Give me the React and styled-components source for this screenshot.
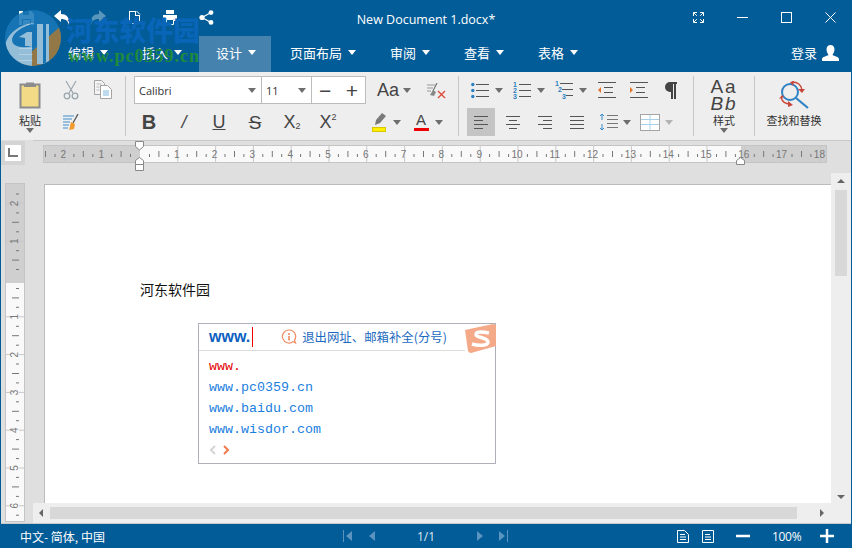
import React from "react";
import styled, { createGlobalStyle } from "styled-components";

const BLUE = "#025c97";
const CJK = `"Noto Sans CJK SC", "Noto Sans", sans-serif`;

const Global = createGlobalStyle`
  html, body { margin: 0; padding: 0; background: #fff; }
  * { box-sizing: border-box; }
`;

const Window = styled.div`
  position: relative;
  width: 852px;
  height: 548px;
  display: flex;
  flex-direction: column;
  overflow: hidden;
  font-family: ${CJK};
`;

/* title bar */
const TitleBar = styled.div`
  display: grid;
  grid-template-columns: 1fr auto 1fr;
  align-items: center;
  height: 36px;
  flex: none;
  background: ${BLUE};
  color: #fff;
`;
const QuickAccess = styled.div`
  display: flex;
  padding: 0 0 2px 8px;
`;
const QuickBtn = styled.div`
  width: 36px;
  display: flex;
  justify-content: center;
  opacity: ${({ $dim }) => ($dim ? 0.35 : 1)};
`;
const Title = styled.div`
  font: 12.5px "Open Sans", sans-serif;
  padding-top: 2px;
`;
const WindowControls = styled.div`
  display: flex;
  justify-content: flex-end;
  padding-bottom: 2px;
`;
const WinBtn = styled.div`
  width: 44px;
  display: flex;
  justify-content: center;
`;

/* menu */
const MenuBar = styled.div`
  display: flex;
  align-items: stretch;
  height: 36px;
  flex: none;
  background: ${BLUE};
  color: #fff;
  font-size: 13px;
  padding-left: 19px;
`;
const Burger = styled.div`
  width: 14px;
  margin-right: 18px;
  display: flex;
  flex-direction: column;
  justify-content: center;
  gap: 5px;
  & > i {
    display: block;
    height: 1px;
    background: #fff;
  }
`;
const MenuItem = styled.div`
  display: flex;
  align-items: center;
  gap: 6px;
  padding: ${({ $active }) => ($active ? "0 15px 3px 17px" : "0 17px 3px")};
  margin-right: ${({ $active }) => ($active ? "2px" : "0")};
  background: ${({ $active }) => ($active ? "#4583ae" : "transparent")};
`;
const Caret = styled.span`
  display: inline-block;
  flex: none;
  width: 0;
  height: 0;
  border-left: 4px solid transparent;
  border-right: 4px solid transparent;
  border-top: 5px solid ${({ $color }) => $color || "#6e6e6e"};
`;
const Login = styled.div`
  margin-left: auto;
  display: flex;
  align-items: center;
  gap: 5px;
  padding: 0 13px 3px 0;
`;

/* ribbon */
const Ribbon = styled.div`
  display: flex;
  height: 68px;
  flex: none;
  background: #eeeeee;
  border-left: 1px solid ${BLUE};
  border-right: 1px solid ${BLUE};
  color: #333;
`;
const Group = styled.div`
  width: ${({ $w }) => $w}px;
  flex: none;
  display: flex;
  gap: ${({ $gap }) => $gap || 0}px;
  margin: 4px 0;
  padding-left: ${({ $pl }) => $pl || 0}px;
  border-right: ${({ $last }) => ($last ? "none" : "1px solid #c6c6c6")};
`;
const Rows = styled.div`
  display: flex;
  flex-direction: column;
  gap: 4px;
`;
const Row = styled.div`
  display: flex;
  align-items: center;
  height: 28px;
  gap: ${({ $gap }) => $gap || 0}px;
`;
const Cell = styled.div`
  width: ${({ $w }) => $w}px;
  height: 28px;
  flex: none;
  display: flex;
  align-items: center;
  justify-content: center;
  gap: ${({ $gap }) => $gap || 0}px;
  margin-left: ${({ $ml }) => $ml || 0}px;
  background: ${({ $active }) => ($active ? "#c4c4c4" : "transparent")};
`;
const BigCol = styled.div`
  width: ${({ $w }) => $w}px;
  flex: none;
  display: flex;
  flex-direction: column;
  align-items: center;
`;
const BigIcon = styled.div`
  height: 37px;
  display: flex;
  align-items: center;
  justify-content: center;
`;
const BigLabel = styled.div`
  font-size: 11px;
  line-height: 14px;
  height: 15px;
  white-space: nowrap;
  color: #333;
`;
const Combo = styled.div`
  width: 232px;
  height: 28px;
  margin-left: 3px;
  display: flex;
  background: #fff;
  border: 1px solid #bcbcbc;
  font: 11px "Open Sans", sans-serif;
  color: #333;
`;
const ComboPart = styled.div`
  width: ${({ $w }) => $w}px;
  flex: none;
  display: flex;
  align-items: center;
  justify-content: space-between;
  padding: ${({ $last }) => ($last ? "0 7px" : "0 5px 0 4px")};
  border-right: ${({ $last }) => ($last ? "none" : "1px solid #bcbcbc")};
`;
const Glyph = styled.span`
  font-family: "Liberation Sans", sans-serif;
  font-size: ${({ $size }) => $size || 18}px;
  font-weight: ${({ $bold }) => ($bold ? 700 : 400)};
  font-style: ${({ $italic }) => ($italic ? "italic" : "normal")};
  text-decoration: ${({ $deco }) => $deco || "none"};
  color: #444;
  line-height: 1;
  & sub {
    font-size: 9px;
    line-height: 0;
    vertical-align: -1px;
  }
  & sup {
    font-size: 9px;
    line-height: 0;
    vertical-align: 8px;
  }
`;
const StyleSample = styled.div`
  font-family: "Liberation Sans", sans-serif;
  font-size: 19px;
  line-height: 17px;
  letter-spacing: 2px;
  text-align: center;
  color: #444;
  font-style: ${({ $italic }) => ($italic ? "italic" : "normal")};
`;

/* workspace */
const Workspace = styled.div`
  flex: 1;
  min-height: 0;
  display: grid;
  grid-template-columns: 32px 798px 20px;
  grid-template-rows: 33px 330px 20px 1px;
  background: #dfdfdf;
  border-left: 1px solid ${BLUE};
  border-right: 1px solid ${BLUE};
`;
const Corner = styled.div`
  grid-column: 1;
  grid-row: 1;
  width: 24px;
  height: 24px;
  margin-top: 1px;
  padding: 4px;
  background: #d4d4d4;
`;
const TabStop = styled.div`
  width: 16px;
  height: 16px;
  background: #fff;
  display: flex;
  align-items: center;
  justify-content: center;
`;
const HRuler = styled.svg`
  grid-column: 2 / 4;
  grid-row: 1;
  display: block;
`;
const VRuler = styled.svg`
  grid-column: 1;
  grid-row: 2 / 4;
  margin: 10px 0 0 4px;
  display: block;
`;
const Page = styled.div`
  grid-column: 2;
  grid-row: 2 / 4;
  position: relative;
  margin: 11px 0 0 11px;
  background: #fff;
  border-top: 1px solid #bcbcbc;
  border-left: 1px solid #bcbcbc;
  padding: 94px 0 0 95px;
  font-size: 14px;
  line-height: 20px;
  color: #111;
`;
const VScroll = styled.div`
  grid-column: 3;
  grid-row: 2;
  background: #eeeeee;
  display: flex;
  flex-direction: column;
  align-items: center;
  padding-top: 6px;
  z-index: 1;
`;
const VThumb = styled.div`
  width: 12px;
  height: 86px;
  margin-top: 7px;
  background: #d8d8d8;
`;
const HScroll = styled.div`
  grid-column: 2;
  grid-row: 3;
  background: #eeeeee;
  display: flex;
  align-items: center;
  padding-left: 6px;
  z-index: 1;
`;
const HThumb = styled.div`
  width: 747px;
  height: 12px;
  margin: 0 23px 0 7px;
  background: #d8d8d8;
`;
const ScrollCorner = styled.div`
  grid-column: 3;
  grid-row: 3;
  background: #eeeeee;
  z-index: 1;
`;
const ArrowUp = styled.span`
  width: 0;
  height: 0;
  flex: none;
  border-left: 4px solid transparent;
  border-right: 4px solid transparent;
  border-bottom: 4px solid #666;
`;
const ArrowDown = styled(ArrowUp)`
  border-bottom: none;
  border-top: 4px solid #666;
  margin-top: auto;
  margin-bottom: 4px;
`;
const ArrowSide = styled.span`
  width: 0;
  height: 0;
  flex: none;
  border-top: 4px solid transparent;
  border-bottom: 4px solid transparent;
  border-${({ $dir }) => ($dir === "left" ? "right" : "left")}: 4px solid #666;
`;
const BottomLine = styled.div`
  grid-column: 1 / 4;
  grid-row: 4;
  background: #c8c8c8;
`;

/* input method popup */
const ImePopup = styled.div`
  position: absolute;
  left: 153px;
  top: 138px;
  width: 298px;
  height: 141px;
  background: #fff;
  border: 1px solid #b0b0b8;
`;
const ImeHead = styled.div`
  width: 266px;
  height: 27px;
  padding-left: 10px;
  display: flex;
  align-items: center;
  border-bottom: 1px solid #dcdcdc;
`;
const ImeInput = styled.span`
  font: 700 16px "Liberation Sans", sans-serif;
  color: #0d5fc0;
`;
const ImeCaret = styled.span`
  width: 1px;
  height: 20px;
  margin-left: 2px;
  background: #f00000;
`;
const ImeHint = styled.span`
  display: flex;
  align-items: center;
  gap: 5px;
  margin-left: 28px;
  font-size: 12.4px;
  white-space: nowrap;
  color: #1b69c0;
`;
const ImeLogo = styled.svg`
  position: absolute;
  right: -1px;
  top: 0;
`;
const ImeList = styled.div`
  padding: 5px 0 0 10px;
  font: 13.33px/21px "Liberation Mono", monospace;
  color: #1a80e0;
`;
const ImeItem = styled.div`
  color: ${({ $match }) => ($match ? "#e60000" : "inherit")};
`;
const ImePager = styled.div`
  display: flex;
  gap: 7px;
  margin: 5px 0 0 10px;
`;

/* status bar */
const StatusBar = styled.div`
  display: flex;
  align-items: center;
  height: 24px;
  flex: none;
  background: ${BLUE};
  color: #fff;
  font-size: 12px;
  padding: 0 18px 0 20px;
`;
const Lang = styled.div`
  width: 323px;
  white-space: nowrap;
`;
const Pager = styled.div`
  display: flex;
  align-items: center;
  color: #dfe9f2;
`;
const PagerBtn = styled.span`
  display: flex;
  margin-left: ${({ $ml }) => $ml || 0}px;
`;
const PageNum = styled.span`
  width: 18px;
  margin-left: 42px;
  font: 12px "Open Sans", sans-serif;
  white-space: nowrap;
`;
const StatusRight = styled.div`
  margin-left: auto;
  display: flex;
  align-items: center;
`;
const Zoom = styled.span`
  width: 28px;
  margin: 0 20px 0 22px;
  font: 12px "Open Sans", sans-serif;
  letter-spacing: -0.3px;
  white-space: nowrap;
`;

/* watermark */
const Watermark = styled.div`
  position: absolute;
  left: 5px;
  top: 10px;
  display: flex;
  pointer-events: none;
`;
const LogoWrap = styled.div`
  opacity: 0.88;
`;
const MarkText = styled.div`
  margin: 5px 0 0 3px;
`;
const MarkTitle = styled.div`
  font: 900 26.8px/30px ${CJK};
  color: #0865b8;
  white-space: nowrap;
`;
const MarkUrl = styled.div`
  margin: 0 0 0 2px;
  font: 700 18px/22px "Liberation Serif", serif;
  letter-spacing: 1px;
  color: #1f8a3c;
  white-space: nowrap;
`;

/* drawings */
const Svg = ({ w, h, children, ...rest }) => (
  <svg width={w} height={h} viewBox={`0 0 ${w} ${h}`} fill="none" {...rest}>
    {children}
  </svg>
);

const SaveIcon = () => (
  <Svg w={15} h={15}>
    <path d="M0 1h12l3 3v11H0z" fill="#fff" />
    <rect x="4" y="1" width="6" height="4" fill={BLUE} />
    <rect x="3" y="9" width="9" height="6" fill={BLUE} />
    <rect x="4" y="10" width="7" height="5" fill="#fff" />
  </Svg>
);
const UndoIcon = ({ flip }) => (
  <Svg w={16} h={15} style={flip ? { transform: "scaleX(-1)" } : undefined}>
    <path d="M0 6l7-6v4c5 0 9 3 8 11-1-4-3-6-8-6v3z" fill="#fff" />
  </Svg>
);
const NewIcon = () => (
  <Svg w={13} h={15}>
    <path d="M1 1h7v4h4v9H1z" fill="#fff" />
    <path d="M2 2h5v4h4v7H2z" fill={BLUE} />
    <path d="M8.500 1l3.500 3.500" stroke="#fff" />
  </Svg>
);
const PrintIcon = () => (
  <Svg w={14} h={15}>
    <rect x="3" y="0" width="8" height="4" fill="#fff" />
    <path d="M0 5h14v6h-3V9H3v2H0z" fill="#fff" />
    <path d="M3.500 9.500h7v5h-7z" stroke="#fff" />
  </Svg>
);
const ShareIcon = () => (
  <Svg w={15} h={15}>
    <path d="M3 7.500L12 2.500M3 7.500l9 5" stroke="#fff" strokeWidth="1.200" />
    <circle cx="3" cy="7.500" r="2.600" fill="#fff" />
    <circle cx="12" cy="2.600" r="2.400" fill="#fff" />
    <circle cx="12" cy="12.400" r="2.400" fill="#fff" />
  </Svg>
);
const FullIcon = () => (
  <Svg w={11} h={11} stroke="#fff">
    <path d="M.5 4V.5H4M.8.8l3 3M7 .5h3.500V4M10.200.8l-3 3M.5 7v3.500H4M.8 10.200l3-3M7 10.500h3.500V7M10.200 10.200l-3-3" />
  </Svg>
);
const MinIcon = () => (
  <Svg w={11} h={11}>
    <path d="M0 5.500h11" stroke="#fff" />
  </Svg>
);
const MaxIcon = () => (
  <Svg w={11} h={11}>
    <rect x=".5" y=".5" width="10" height="10" stroke="#fff" />
  </Svg>
);
const CloseIcon = () => (
  <Svg w={11} h={11}>
    <path d="M.5.5l10 10M10.500.5l-10 10" stroke="#fff" />
  </Svg>
);
const UserIcon = () => (
  <Svg w={17} h={16}>
    <path d="M8.500 0c2.500 0 4 2 4 4.500S11 9 10.500 10c2 1 6.500 2 6.500 4v2H0v-2c0-2 4.500-3 6.500-4C6 9 4.500 7 4.500 4.500S6 0 8.500 0z" fill="#fff" />
  </Svg>
);
const PasteIcon = () => (
  <Svg w={22} h={28}>
    <rect x="1.500" y="3.500" width="19" height="23" fill="#f2da86" stroke="#8c8c8c" strokeWidth="2" />
    <path d="M7 4V1.500h8V4h2v2H5V4z" fill="#8c8c8c" />
  </Svg>
);
const CutIcon = () => (
  <Svg w={16} h={20} stroke="#9aa6ae">
    <path d="M3 1l7 12M13 1L6 13" strokeWidth="1.200" />
    <circle cx="4" cy="16" r="2.800" strokeWidth="1.300" />
    <circle cx="12" cy="16" r="2.800" strokeWidth="1.300" />
  </Svg>
);
const CopyIcon = () => (
  <Svg w={18} h={20}>
    <path d="M.5.500h7l3 3v11H.5z" fill="#f4f4f4" stroke="#a4a4a4" />
    <path d="M6.500 5.500h7l4 4v9h-11z" fill="#fff" stroke="#a4a4a4" />
    <path d="M9 11h6M9 13h6M9 15h6" stroke="#7fb6dc" />
    <path d="M2.500 4h5M2.500 7h3M2.500 10h3" stroke="#b8b8b8" />
  </Svg>
);
const PainterIcon = () => (
  <Svg w={16} h={16}>
    <path d="M0 2h11M0 5h9M0 8h7M0 11h6M0 14h5" stroke="#3f8fd0" />
    <path d="M15 0l-5 9" stroke="#555" strokeWidth="1.300" />
    <path d="M8 8l4 2-1 5-5 1c1-2 1-5 2-8z" fill="#f29a2e" />
  </Svg>
);
const ClearIcon = () => (
  <Svg w={20} h={17}>
    <path d="M0 3h8M0 6h6M0 9h4" stroke="#999" />
    <path d="M10 1L6 9" stroke="#555" />
    <path d="M3 13l3-5 3 2-2 4z" fill="#888" />
    <path d="M11 9l7 7M18 9l-7 7" stroke="#e04a3a" strokeWidth="1.400" />
  </Svg>
);
const HighlightIcon = () => (
  <Svg w={15} h={20}>
    <path d="M10 1l4 3-6 7-5 2 1-5z" fill="#7a7a7a" />
    <rect x="0" y="15" width="14" height="5" fill="#ffee00" />
    <rect x=".5" y="15.500" width="13" height="4" stroke="#d8c800" />
  </Svg>
);
const ListLines = ({ x, ys, w }) => (
  <path d={ys.map(y => `M${x} ${y}h${w}`).join("")} stroke="#555" />
);
const BulletsIcon = () => (
  <Svg w={18} h={17}>
    <ListLines x={5} ys={[2.5, 8.5, 14.5]} w={13} />
    <circle cx="1.800" cy="2.500" r="1.700" fill="#2c80c0" />
    <circle cx="1.800" cy="8.500" r="1.700" fill="#2c80c0" />
    <circle cx="1.800" cy="14.500" r="1.700" fill="#2c80c0" />
  </Svg>
);
const Digit = styled.text`
  font: 700 7px "Liberation Sans", sans-serif;
  fill: #2c80c0;
`;
const NumberedIcon = () => (
  <Svg w={18} h={18}>
    <ListLines x={6} ys={[3.5, 9.5, 15.5]} w={12} />
    <Digit x="0" y="6">1</Digit>
    <Digit x="0" y="12">2</Digit>
    <Digit x="0" y="18">3</Digit>
  </Svg>
);
const MultiIcon = () => (
  <Svg w={18} h={18}>
    <path d="M5 2.500h13M7 8.500h11M11 14.500h7" stroke="#555" />
    <Digit x="0" y="5">1</Digit>
    <Digit x="3" y="11">2</Digit>
    <Digit x="7" y="18">3</Digit>
  </Svg>
);
const IndentIcon = ({ out }) => (
  <Svg w={18} h={17}>
    <path d="M0 .5h18M6 5.500h9M6 10.500h9M0 15.500h18" stroke="#555" />
    <path d={out ? "M3 5v6L0 8z" : "M0 5v6l3-3z"} fill="#e0752a" />
  </Svg>
);
const PilcrowIcon = () => (
  <Svg w={12} h={17}>
    <path d="M12 0H5a5 5 0 0 0 0 10h1v7h2V2h1v15h2V2h1z" fill="#444" />
  </Svg>
);
const AlignIcon = ({ mode }) => {
  const rows = {
    left: [[0, 14], [0, 9], [0, 14], [0, 9]],
    center: [[0, 14], [3, 8], [0, 14], [3, 8]],
    right: [[0, 14], [5, 9], [0, 14], [5, 9]],
    justify: [[0, 14], [0, 14], [0, 14], [0, 14]]
  }[mode];
  return (
    <Svg w={14} h={13}>
      {rows.map(([x, w], i) => (
        <path key={i} d={`M${x} ${0.5 + i * 4}h${w}`} stroke="#555" />
      ))}
    </Svg>
  );
};
const SpacingIcon = () => (
  <Svg w={19} h={18}>
    <path d="M3 1v6M3 11v6M1 3l2-2 2 2M1 15l2 2 2-2" stroke="#3a8bc8" />
    <path d="M8 2.500h11M8 6.500h11M8 10.500h11M8 14.500h11" stroke="#777" />
  </Svg>
);
const TableIcon = () => (
  <Svg w={20} h={17}>
    <rect x=".5" y=".5" width="19" height="16" fill="#fff" stroke="#a4a4a4" />
    <path d="M1 5.500h18M1 10.500h18M10 1v15" stroke="#a8d0ea" />
  </Svg>
);
const FindIcon = () => (
  <Svg w={30} h={28}>
    <circle cx="11" cy="11" r="8" stroke="#2f82c4" strokeWidth="2" />
    <path d="M17 17l12 10" stroke="#2f82c4" strokeWidth="2.200" />
    <path d="M13 1c5 0 9 2 10 8" stroke="#c9453a" strokeWidth="1.400" />
    <path d="M11 1l4-1-1 5zM19 8h7l-3 4z" fill="#c9453a" />
    <path d="M2 16c1 4 4 7 9 7" stroke="#c9453a" strokeWidth="1.400" />
    <path d="M0 18l5-2-2-2zM9 20v6l5-2z" fill="#c9453a" />
  </Svg>
);
const CornerIcon = () => (
  <Svg w={10} h={10}>
    <path d="M1 0v8h9" stroke="#777" strokeWidth="2" />
  </Svg>
);
const DocIcon = ({ fold }) => (
  <Svg w={12} h={13}>
    <path d={fold ? "M.5.500h7l4 4v8H.5z" : "M.5.500h11v12H.5z"} stroke="#fff" />
    <path d="M3 4.500h5M3 7h6M3 9.500h6" stroke="#fff" />
  </Svg>
);
const PagerIcon = ({ dir, bar }) => (
  <Svg w={bar ? 9 : 6} h={12}>
    {dir === "left" ? (
      <path d={bar ? "M9 1v10L3 6zM0 0h1v12H0z" : "M6 1v10L0 6z"} fill="#5a94bf" />
    ) : (
      <path d={bar ? "M0 1v10l6-5zM8 0h1v12H8z" : "M0 1v10l6-5z"} fill="#5a94bf" />
    )}
  </Svg>
);
const InfoIcon = () => (
  <Svg w={16} h={16}>
    <path d="M8 1a6.500 6.500 0 1 0 4 11.600l2.500 1.400-1-2.800A6.500 6.500 0 0 0 8 1z" stroke="#f08a60" strokeWidth="1.200" />
    <path d="M8 4v2M8 7v4.500" stroke="#f08a60" strokeWidth="1.600" />
  </Svg>
);
const SogouMark = () => (
  <ImeLogo width="31" height="30" viewBox="0 0 31 30">
    <path d="M0 6L28 0q3 0 3 3v19L6 29q-2 0-3-2z" fill="#f4a988" />
    <path d="M24 9c-5-1-13-2-13 1.500S23 13 23 18c0 4-10 4-16 2" stroke="#fff" strokeWidth="3.500" fill="none" />
  </ImeLogo>
);
const Chevron = ({ color, left }) => (
  <Svg w={7} h={10}>
    <path d={left ? "M6 1L2 5l4 4" : "M1 1l4 4-4 4"} stroke={color} strokeWidth="2" />
  </Svg>
);
const Logo = () => (
  <Svg w={58} h={58}>
    <defs>
      <clipPath id="logo-clip">
        <circle cx="28" cy="28" r="28" />
      </clipPath>
    </defs>
    <g clipPath="url(#logo-clip)">
      <rect width="58" height="58" fill="#1a78b8" />
      <path d="M58 14V58H8z" fill="#a67c3c" />
      <path d="M0 36C2 24 14 14 30 13c-12 3-23 10-23 17 0 6 9 9 20 6v22H12C4 54 0 46 0 36z" fill="#a9cbe0" />
      <path d="M14 27l8-5h5v14h-7V28z" fill="#a9cbe0" />
      <path d="M32 14h12v40H32z" fill="#a9cbe0" />
      <path d="M38 14h3v40h-3z" fill="#1a78b8" />
    </g>
  </Svg>
);

const CM = 37.8;
const range = (a, b) => Array.from({ length: b - a + 1 }, (_, i) => a + i);

const HorizontalRuler = () => {
  const ox = 107;
  const y0 = 5;
  return (
    <HRuler width="818" height="33" viewBox="0 0 818 33" fill="none">
      <path d="M0 .5h818" stroke="#c8c8c8" />
      <rect x="10" y={y0} width="97" height="18" fill="#cfcfcf" />
      <rect x="107" y={y0} width="601" height="18" fill="#f9f9f9" />
      <rect x="708" y={y0} width="86" height="18" fill="#cfcfcf" />
      <rect x="10.500" y={y0 + 0.5} width="783" height="17" stroke="#c4c4c4" />
      {range(-3, 18).map(n => {
        const x = ox + n * CM;
        return (
          <g key={n}>
            {n !== 0 && x > 10 && (
              <>
                <path d={`M${x.toFixed(1)} ${y0}v18`} stroke="#c8c8c8" />
                <text
                  x={x - 1}
                  y={y0 + 13}
                  textAnchor="middle"
                  fontFamily="Liberation Sans"
                  fontSize="10"
                  fill="#777"
                >
                  {Math.abs(n)}
                </text>
              </>
            )}
            {[0.25, 0.5, 0.75].map(f => {
              const tx = x + CM * f;
              if (tx < 12 || tx > 792) return null;
              return (
                <path
                  key={f}
                  d={f === 0.5 ? `M${tx.toFixed(1)} ${y0 + 6}v6` : `M${tx.toFixed(1)} ${y0 + 9}v3`}
                  stroke="#777"
                />
              );
            })}
          </g>
        );
      })}
      <path d="M102.500 1.500h8v5l-4 3.500-4-3.500z" fill="#fff" stroke="#888" />
      <path d="M102.500 24.500v-4l4-3 4 3v4zM102.500 24.500h8v6h-8z" fill="#fff" stroke="#888" />
      <path d="M703.500 24.500v-4l4-3 4 3v4z" fill="#fff" stroke="#888" />
    </HRuler>
  );
};

const VerticalRuler = () => {
  const oy = 96;
  return (
    <VRuler width="20" height="339" viewBox="0 0 20 339" fill="none">
      <rect x=".5" y="0" width="19" height="100" fill="#cfcfcf" />
      <rect x=".5" y="100" width="19" height="239" fill="#f9f9f9" />
      <rect x=".5" y=".5" width="19" height="338" stroke="#c4c4c4" />
      {range(-3, 6).map(n => {
        const y = oy + n * CM;
        return (
          <g key={n}>
            {y > 2 && n !== 0 && (
              <>
                <path d={`M1 ${y.toFixed(1)}h5M14 ${y.toFixed(1)}h5`} stroke="#c8c8c8" />
                <text
                  x="10"
                  y={y + 3}
                  transform={`rotate(-90 10 ${y})`}
                  textAnchor="middle"
                  fontFamily="Liberation Sans"
                  fontSize="10"
                  fill="#777"
                >
                  {Math.abs(n)}
                </text>
              </>
            )}
            {[0.25, 0.5, 0.75].map(f => {
              const ty = y + CM * f;
              if (ty < 2 || ty > 337) return null;
              return (
                <path
                  key={f}
                  d={f === 0.5 ? `M7 ${ty.toFixed(1)}h7` : `M11 ${ty.toFixed(1)}h3`}
                  stroke="#777"
                />
              );
            })}
          </g>
        );
      })}
    </VRuler>
  );
};

const menus = ["编辑", "插入", "设计", "页面布局", "审阅", "查看", "表格"];
const imeItems = ["www.pc0359.cn", "www.baidu.com", "www.wisdor.com"];

const App = () => (
  <Window>
    <Global />
    <TitleBar>
      <QuickAccess>
        <QuickBtn><SaveIcon /></QuickBtn>
        <QuickBtn><UndoIcon /></QuickBtn>
        <QuickBtn $dim><UndoIcon flip /></QuickBtn>
        <QuickBtn><NewIcon /></QuickBtn>
        <QuickBtn><PrintIcon /></QuickBtn>
        <QuickBtn><ShareIcon /></QuickBtn>
      </QuickAccess>
      <Title>New Document 1.docx*</Title>
      <WindowControls>
        <WinBtn><FullIcon /></WinBtn>
        <WinBtn><MinIcon /></WinBtn>
        <WinBtn><MaxIcon /></WinBtn>
        <WinBtn><CloseIcon /></WinBtn>
      </WindowControls>
    </TitleBar>

    <MenuBar>
      <Burger><i /><i /><i /></Burger>
      {menus.map(m => (
        <MenuItem key={m} $active={m === "设计"}>
          {m}
          <Caret $color="#fff" />
        </MenuItem>
      ))}
      <Login>
        登录
        <UserIcon />
      </Login>
    </MenuBar>

    <Ribbon>
      <Group $w={125}>
        <BigCol $w={58}>
          <BigIcon><PasteIcon /></BigIcon>
          <BigLabel>粘贴</BigLabel>
          <Caret />
        </BigCol>
        <Rows>
          <Row $gap={8}>
            <Cell $w={24}><CutIcon /></Cell>
            <Cell $w={24}><CopyIcon /></Cell>
          </Row>
          <Row>
            <Cell $w={24}><PainterIcon /></Cell>
          </Row>
        </Rows>
      </Group>

      <Group $w={333} $pl={5}>
        <Rows>
          <Row>
            <Combo>
              <ComboPart $w={127}>Calibri<Caret /></ComboPart>
              <ComboPart $w={50}>11<Caret /></ComboPart>
              <ComboPart $w={53} $last>
                <Glyph $size={21}>−</Glyph>
                <Glyph $size={21}>+</Glyph>
              </ComboPart>
            </Combo>
            <Cell $w={36} $ml={10} $gap={4}>
              <Glyph $size={18}>Aa</Glyph>
              <Caret />
            </Cell>
            <Cell $w={24} $ml={13}><ClearIcon /></Cell>
          </Row>
          <Row>
            <Cell $w={36}><Glyph $size={20} $bold>B</Glyph></Cell>
            <Cell $w={34}><Glyph $size={18} $italic>/</Glyph></Cell>
            <Cell $w={36}><Glyph $size={18} $deco="underline">U</Glyph></Cell>
            <Cell $w={36}><Glyph $size={19} $deco="line-through">S</Glyph></Cell>
            <Cell $w={38}><Glyph $size={18}>X<sub>2</sub></Glyph></Cell>
            <Cell $w={34}><Glyph $size={18}>X<sup>2</sup></Glyph></Cell>
            <Cell $w={36} $ml={23} $gap={6}>
              <HighlightIcon />
              <Caret />
            </Cell>
            <Cell $w={35} $ml={7} $gap={6}>
              <Svg w={15} h={20}>
                <text x="2" y="13" fontFamily="Liberation Sans" fontSize="15" fill="#444">A</text>
                <rect x="0" y="16" width="15" height="3" fill="#ee0000" />
              </Svg>
              <Caret />
            </Cell>
          </Row>
        </Rows>
      </Group>

      <Group $w={235} $pl={8}>
        <Rows>
          <Row>
            <Cell $w={40} $gap={6}><BulletsIcon /><Caret /></Cell>
            <Cell $w={40} $ml={2} $gap={6}><NumberedIcon /><Caret /></Cell>
            <Cell $w={40} $ml={2} $gap={6}><MultiIcon /><Caret /></Cell>
            <Cell $w={28} $ml={2}><IndentIcon out /></Cell>
            <Cell $w={28} $ml={4}><IndentIcon /></Cell>
            <Cell $w={28} $ml={4}><PilcrowIcon /></Cell>
          </Row>
          <Row $gap={4}>
            <Cell $w={28} $active><AlignIcon mode="left" /></Cell>
            <Cell $w={28}><AlignIcon mode="center" /></Cell>
            <Cell $w={28}><AlignIcon mode="right" /></Cell>
            <Cell $w={28}><AlignIcon mode="justify" /></Cell>
            <Cell $w={40} $gap={5}><SpacingIcon /><Caret /></Cell>
            <Cell $w={40} $ml={-3} $gap={5}><TableIcon /><Caret $color="#b4b4b4" /></Cell>
          </Row>
        </Rows>
      </Group>

      <Group $w={61}>
        <BigCol $w={60}>
          <BigIcon>
            <div>
              <StyleSample>Aa</StyleSample>
              <StyleSample $italic>Bb</StyleSample>
            </div>
          </BigIcon>
          <BigLabel>样式</BigLabel>
          <Caret />
        </BigCol>
      </Group>

      <Group $w={78} $last>
        <BigCol $w={78}>
          <BigIcon><FindIcon /></BigIcon>
          <BigLabel>查找和替换</BigLabel>
        </BigCol>
      </Group>
    </Ribbon>

    <Workspace>
      <Corner>
        <TabStop><CornerIcon /></TabStop>
      </Corner>
      <HorizontalRuler />
      <VerticalRuler />
      <Page>
        河东软件园
        <ImePopup>
          <ImeHead>
            <ImeInput>www.</ImeInput>
            <ImeCaret />
            <ImeHint>
              <InfoIcon />
              退出网址、邮箱补全(分号)
            </ImeHint>
          </ImeHead>
          <SogouMark />
          <ImeList>
            <ImeItem $match>www.</ImeItem>
            {imeItems.map(item => (
              <ImeItem key={item}>{item}</ImeItem>
            ))}
          </ImeList>
          <ImePager>
            <Chevron color="#d4d4d4" left />
            <Chevron color="#f07a4a" />
          </ImePager>
        </ImePopup>
      </Page>
      <VScroll>
        <ArrowUp />
        <VThumb />
        <ArrowDown />
      </VScroll>
      <HScroll>
        <ArrowSide $dir="left" />
        <HThumb />
        <ArrowSide $dir="right" />
      </HScroll>
      <ScrollCorner />
      <BottomLine />
    </Workspace>

    <StatusBar>
      <Lang>中文- 简体, 中国</Lang>
      <Pager>
        <PagerBtn><PagerIcon dir="left" bar /></PagerBtn>
        <PagerBtn $ml={17}><PagerIcon dir="left" /></PagerBtn>
        <PageNum>1/1</PageNum>
        <PagerBtn $ml={42}><PagerIcon dir="right" /></PagerBtn>
        <PagerBtn $ml={16}><PagerIcon dir="right" bar /></PagerBtn>
      </Pager>
      <StatusRight>
        <DocIcon fold />
        <PagerBtn $ml={13}><DocIcon /></PagerBtn>
        <PagerBtn $ml={22}>
          <Svg w={14} h={14}><path d="M0 7h14" stroke="#fff" strokeWidth="2.500" /></Svg>
        </PagerBtn>
        <Zoom>100%</Zoom>
        <Svg w={14} h={14}><path d="M0 7h14M7 0v14" stroke="#fff" strokeWidth="2.500" /></Svg>
      </StatusRight>
    </StatusBar>

    <Watermark>
      <LogoWrap><Logo /></LogoWrap>
      <MarkText>
        <MarkTitle>河东软件园</MarkTitle>
        <MarkUrl>www.pc0359.cn</MarkUrl>
      </MarkText>
    </Watermark>
  </Window>
);

export default App;
